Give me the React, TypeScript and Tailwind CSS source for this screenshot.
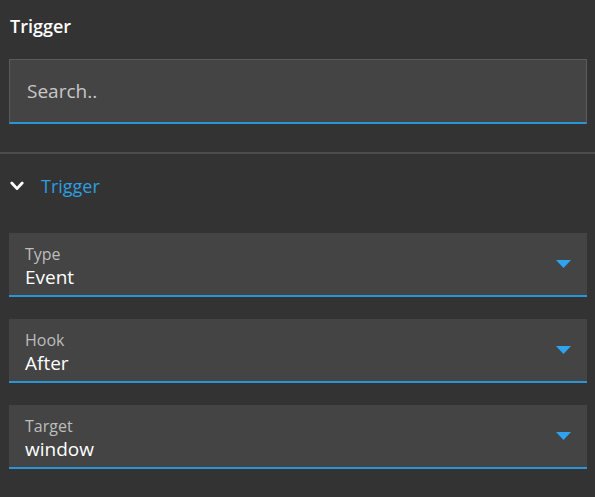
import React from 'react'

const fields = [
  { label: 'Type', value: 'Event' },
  { label: 'Hook', value: 'After' },
  { label: 'Target', value: 'window' },
]

const Caret = () => (
  <svg width="15" height="8" viewBox="0 0 15 8" className="shrink-0">
    <path d="M0 0 H15 L7.5 8 Z" fill="#2ea4f0" />
  </svg>
)

const Chevron = () => (
  <svg width="14" height="11" viewBox="0 0 14 11" className="shrink-0">
    <path d="M1.8 2 L7 7.6 L12.2 2" fill="none" stroke="#ffffff" strokeWidth="2.8" strokeLinecap="round" strokeLinejoin="round" />
  </svg>
)

export default function App() {
  return (
    <div className="w-[595px] h-[497px] overflow-hidden bg-[#333333] font-['Open_Sans',sans-serif]">
      <div className="px-[9px] pt-[14px]">
        <h1 className="text-[18px] leading-[24px] font-semibold text-white pl-[1px]">Trigger</h1>
        <div className="mt-[21px] h-[65px] w-[578px] flex items-center bg-[#444444] border border-[#5b5b5b] border-b-2 border-b-[#2a95d5] px-[17px]">
          <span className="text-[19px] text-[#c8c8c8]">Search..</span>
        </div>
      </div>

      <div className="mt-[28px] h-[2px] bg-[#4c4c4c]" />

      <div className="flex items-center gap-[17px] pl-[10px] mt-[20px] h-[24px]">
        <Chevron />
        <span className="text-[18px] leading-[24px] text-[#2d9ee0]">Trigger</span>
      </div>

      <div className="flex flex-col gap-[22px] px-[9px] mt-[35px]">
        {fields.map(f => (
          <div key={f.label} className="h-[64px] w-[578px] bg-[#444444] border-b-2 border-b-[#2a95d5] flex items-center pl-[16px] pr-[16px]">
            <div className="flex-1 flex flex-col pt-[4px]">
              <span className="text-[16px] leading-[22px] text-[#bdbdbd]">{f.label}</span>
              <span className="text-[19px] leading-[25px] text-white">{f.value}</span>
            </div>
            <Caret />
          </div>
        ))}
      </div>
    </div>
  )
}
